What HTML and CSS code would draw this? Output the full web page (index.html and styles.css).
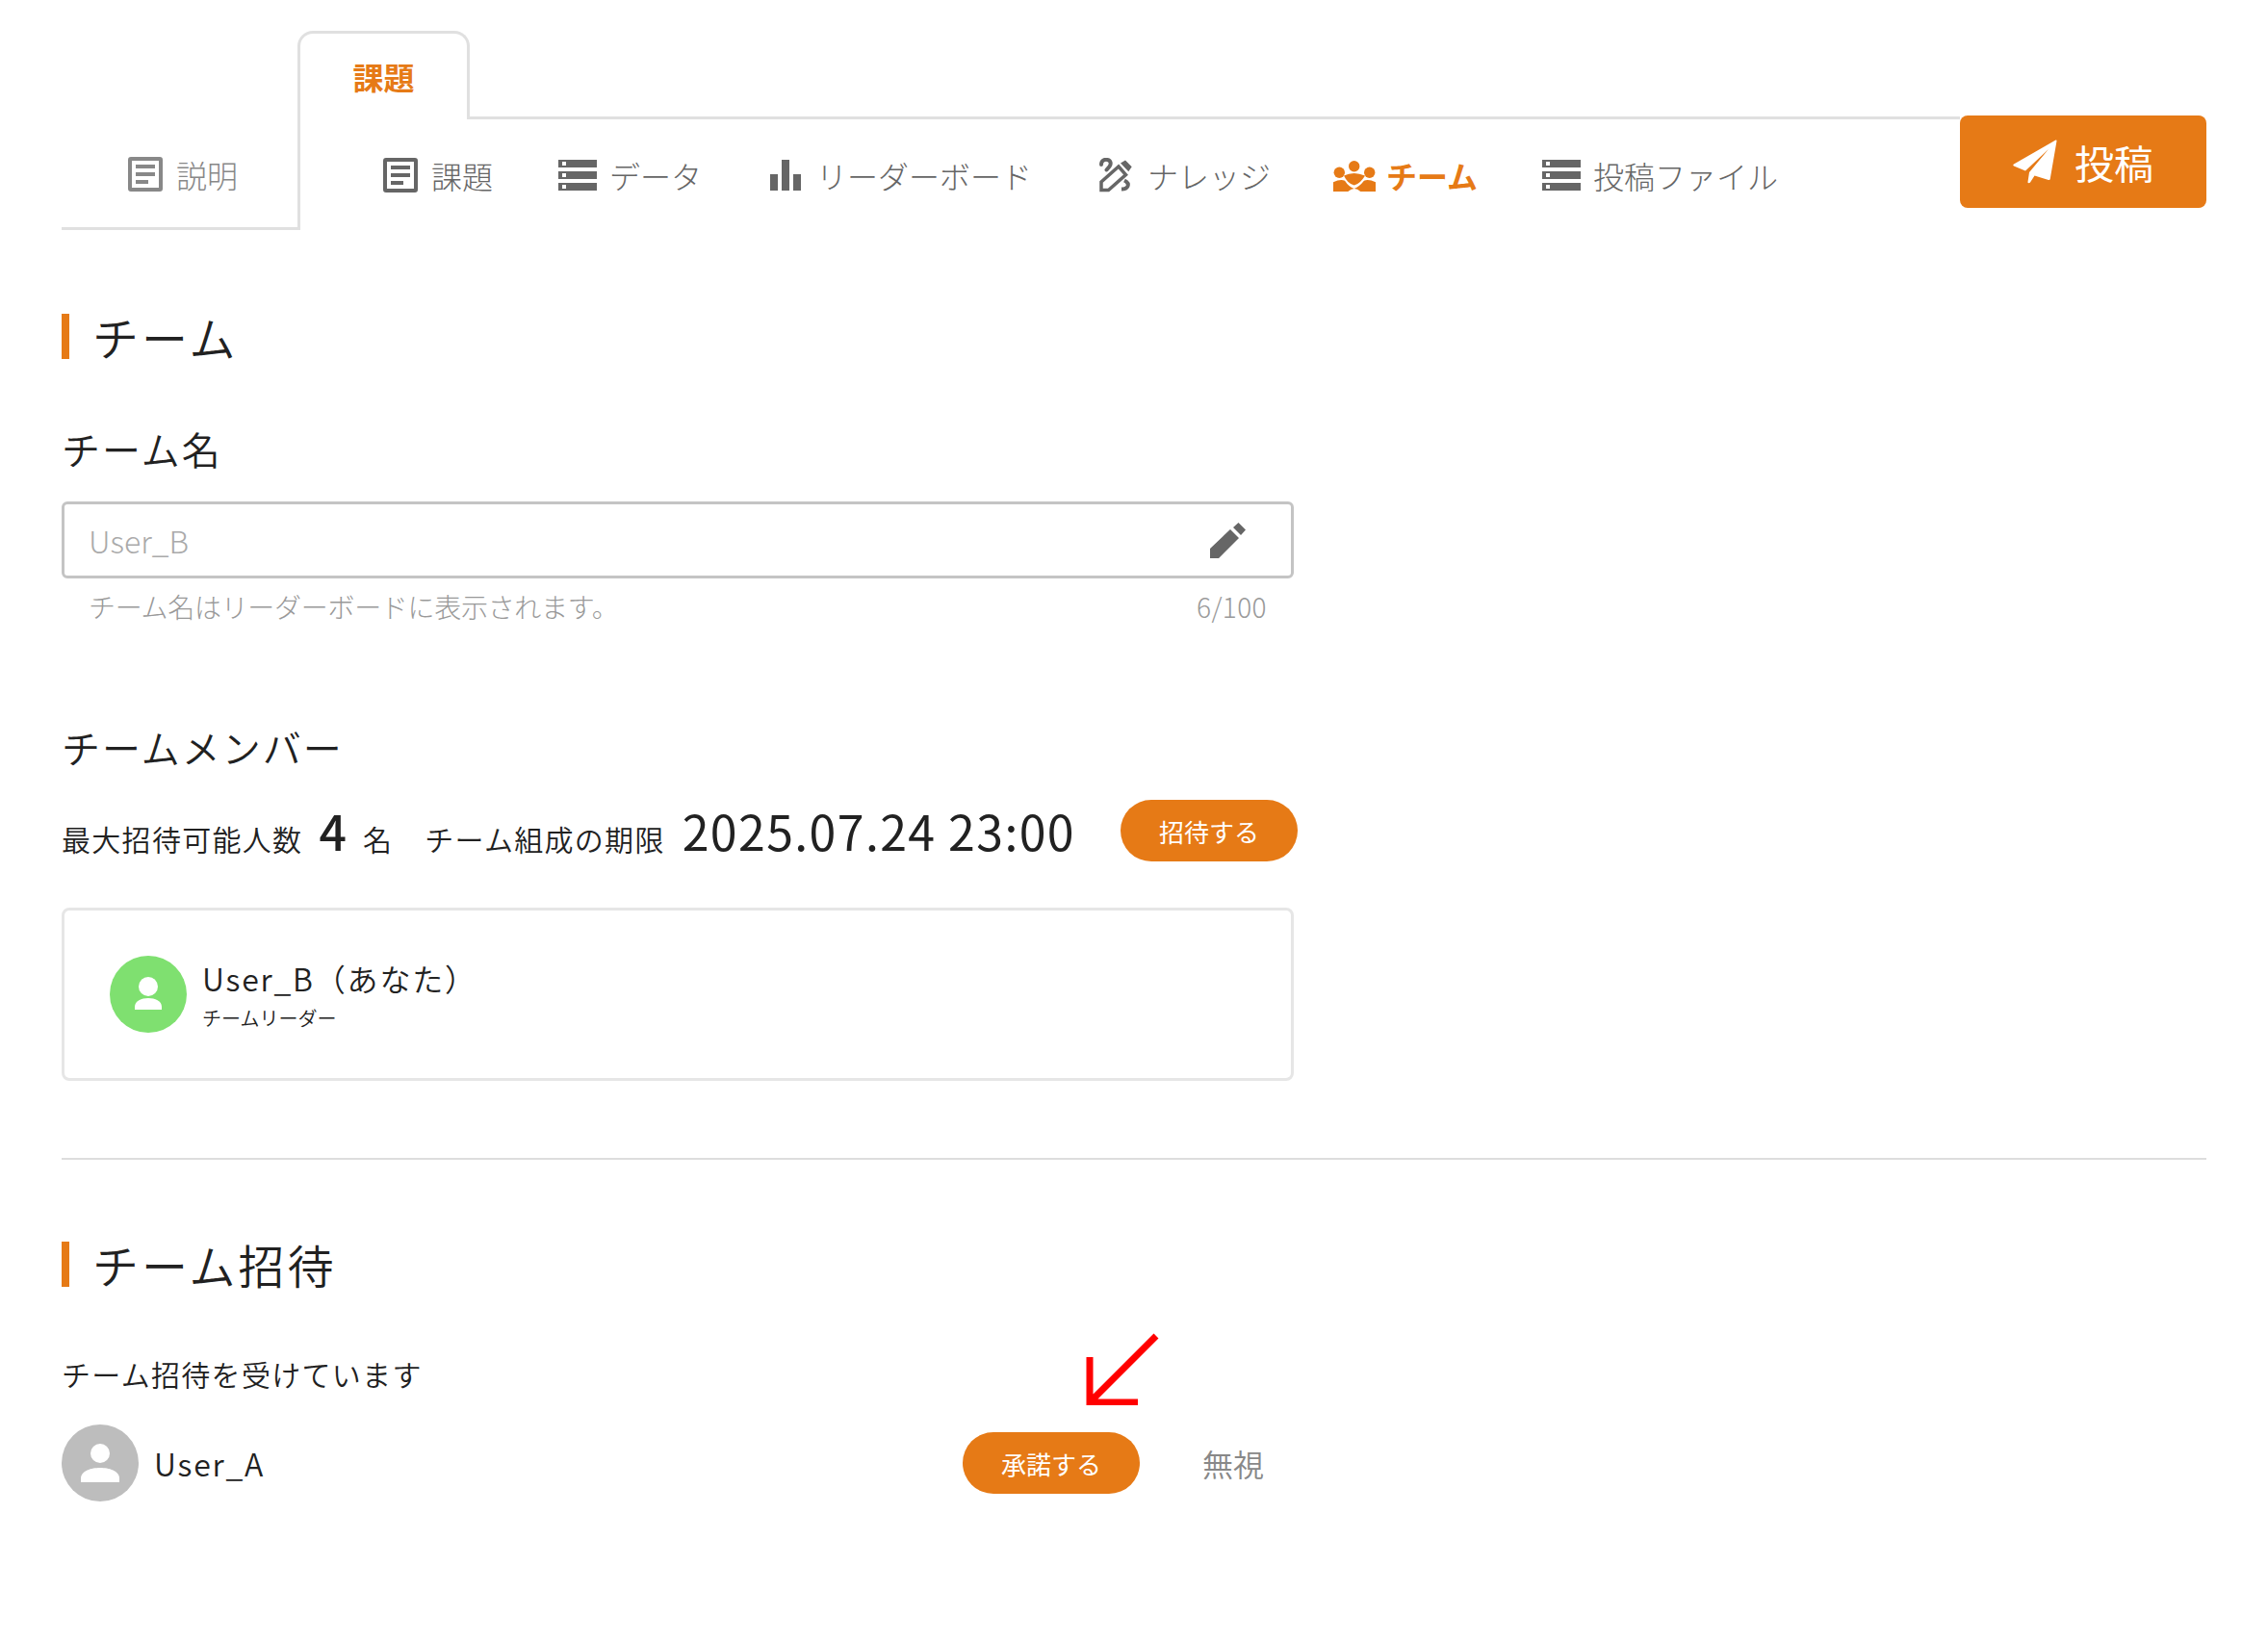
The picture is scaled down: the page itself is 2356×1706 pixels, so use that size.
FILE: index.html
```html
<!DOCTYPE html>
<html lang="ja">
<head>
    <meta charset="utf-8">
    <link rel="stylesheet" href="styles.css">
    <title>チーム</title>
</head>
<body>
    <header class="tabs">
        <a class="tab-plain">
            <svg class="icon-doc" viewBox="0 0 36 36"><path fill-rule="evenodd" d="M3 0h30a3 3 0 0 1 3 3v30a3 3 0 0 1-3 3H3a3 3 0 0 1-3-3V3a3 3 0 0 1 3-3zm1 4v28h28V4zm4 4h20v4H8zm0 8h20v4H8zm0 8h13v4H8z"/></svg>
            説明
        </a>
        <div class="tab-main">
            <div class="tab-head">
                <div class="tab-label">課題</div>
                <div class="tab-line"></div>
            </div>
            <nav class="subnav">
                <a class="subnav-item first">
                    <svg class="icon-doc" viewBox="0 0 36 36"><path fill-rule="evenodd" d="M3 0h30a3 3 0 0 1 3 3v30a3 3 0 0 1-3 3H3a3 3 0 0 1-3-3V3a3 3 0 0 1 3-3zm1 4v28h28V4zm4 4h20v4H8zm0 8h20v4H8zm0 8h13v4H8z"/></svg>
                    課題
                </a>
                <a class="subnav-item data">
                    <svg class="icon-data" viewBox="0 0 40 32"><path fill-rule="evenodd" d="M0 0h40v8H0zm4 2v4h4V2zM0 12h40v8H0zm4 2v4h4v-4zM0 24h40v8H0zm4 2v4h4v-4z"/></svg>
                    データ
                </a>
                <a class="subnav-item board">
                    <svg class="icon-bars" viewBox="0 0 32 32"><path d="M0 15h8v17H0zM12 0h8v32h-8zM24 15h8v17h-8z"/></svg>
                    リーダーボード
                </a>
                <a class="subnav-item know">
                    <svg class="icon-know" viewBox="0 0 35 36"><path d="M2 33.500V25L20 9l7.500 8.500-18 16z" fill="none" stroke="currentColor" stroke-width="3.500"/><path d="M2 7C2 2 6 1.500 8.500 2c3.500.7 4 4.500 2 7L7.500 12.500" fill="none" stroke="currentColor" stroke-width="4" stroke-linecap="round"/><path d="M22 5.500L27 2.500 33.700 9.300 30.300 14.300z"/><path d="M26 23.500c3 1.500 4.500 3.500 3.500 6-1 2.300-3.500 3-6.500 3" fill="none" stroke="currentColor" stroke-width="4"/></svg>
                    ナレッジ
                </a>
                <a class="subnav-item team">
                    <svg class="icon-team" viewBox="0 0 44 34"><circle cx="21.700" cy="7.700" r="5.700"/><circle cx="6.300" cy="14.300" r="5.700"/><circle cx="37.700" cy="14.300" r="5.700"/><path d="M11 17.500Q16 15 21.700 15 27 15 33 17.500 28 26 21.700 27.500 15 26 11 17.500z"/><path d="M0 34V24.300Q7 21 12 22.700 16 29 21.700 31 27 29 32 22.700 37 21 44 24.300V34H28.300Q22 28 15.300 34z"/></svg>
                    チーム
                </a>
                <a class="subnav-item files">
                    <svg class="icon-data" viewBox="0 0 40 32"><path fill-rule="evenodd" d="M0 0h40v8H0zm4 2v4h4V2zM0 12h40v8H0zm4 2v4h4v-4zM0 24h40v8H0zm4 2v4h4v-4z"/></svg>
                    投稿ファイル
                </a>
            </nav>
        </div>
        <a class="post-btn">
            <svg class="icon-plane" viewBox="0 0 46 46"><path d="M44.500 0.500L1 25.500c-1 .6-1 1.500 0 2L13 32.500 37 10 17 34l-1.500 10c0 1.500 1.500 1.500 2.500.5l4.500-7 14.500 4.500c1 .3 1.500 0 1.700-1L45.500 1.500c.1-1-.2-1.300-1-1z"/></svg>
            投稿
        </a>
    </header>

    <main class="content">
        <h2 class="section-title">チーム</h2>

        <h3 class="sub-title name-title">チーム名</h3>
        <div class="name-input">
            <span class="placeholder">User_B</span>
            <svg class="icon-pencil" viewBox="0 0 37 37"><path d="M0 27L21 7l9 9L9 37H0zM24 5l5.500-5L37 7.500 32 13z"/></svg>
        </div>
        <div class="input-help">
            <span>チーム名はリーダーボードに表示されます。</span>
            <span class="count">6/100</span>
        </div>

        <h3 class="sub-title member-title">チームメンバー</h3>
        <div class="limits">
            <span class="limit-label">最大招待可能人数</span>
            <span class="limit-num">4</span>
            <span class="limit-label unit">名</span>
            <span class="limit-label">チーム組成の期限</span>
            <span class="limit-date">2025.07.24 23:00</span>
            <button class="pill invite">招待する</button>
        </div>

        <div class="member-card">
            <div class="avatar green">
                <svg viewBox="0 0 80 80"><circle cx="40" cy="32" r="10"/><path d="M26 56v-3c0-6 7-9 14-9s14 3 14 9v3z"/></svg>
            </div>
            <div class="member-info">
                <div class="user-name">User_B（あなた）</div>
                <div class="user-role">チームリーダー</div>
            </div>
        </div>

        <hr class="divider">

        <h2 class="section-title">チーム招待</h2>
        <p class="invite-note">チーム招待を受けています</p>
        <div class="invite-row">
            <div class="avatar gray">
                <svg viewBox="0 0 80 80"><circle cx="40" cy="30" r="10"/><path d="M20 60v-4c0-8 11-11 20-11s20 3 20 11v4z"/></svg>
            </div>
            <div class="user-name">User_A</div>
            <div class="invite-actions">
                <svg class="arrow" viewBox="0 0 76 75"><path d="M73 3L4 72M4 25v47h50" fill="none" stroke="#ff0000" stroke-width="7"/></svg>
                <button class="pill">承諾する</button>
                <span class="ignore">無視</span>
            </div>
        </div>
    </main>
</body>
</html>
```

FILE: styles.css
```css
* {
    box-sizing: border-box;
}

body {
    margin: 0;
    background: #fff;
    color: #212121;
    font-family: "Noto Sans CJK JP", "Noto Sans", sans-serif;
    font-weight: 350;
}

svg {
    display: block;
    flex: none;
    fill: currentColor;
}

/* tabs */
.tabs {
    display: flex;
    padding: 32px 64px 0;
}

.tab-plain {
    display: flex;
    align-items: center;
    gap: 14px;
    width: 248px;
    height: 117px;
    margin-top: 90px;
    padding: 3px 0 0 69px;
    border-bottom: 3px solid #e0e0e0;
    color: #888;
    font-size: 32px;
    font-weight: 300;
}

.tab-main {
    flex: 1;
}

.tab-head {
    display: flex;
    height: 92px;
}

.tab-label {
    width: 179px;
    padding-top: 22px;
    margin-left: -3px;
    border: 3px solid #e0e0e0;
    border-bottom: 0;
    border-radius: 16px 16px 0 0;
    color: #e67a16;
    font-size: 32px;
    font-weight: 700;
    line-height: 44px;
    text-align: center;
}

.tab-line {
    flex: 1;
    border-bottom: 3px solid #e0e0e0;
}

.subnav {
    display: flex;
    align-items: center;
    height: 115px;
    margin-left: -3px;
    border-left: 3px solid #e0e0e0;
}

.subnav-item {
    display: flex;
    align-items: center;
    gap: 14px;
    color: #666;
    font-size: 32px;
    font-weight: 300;
}

.subnav-item.first {
    margin-left: 86px;
}

.subnav-item.data {
    margin-left: 68px;
    gap: 13px;
}

.subnav-item.board {
    margin-left: 71px;
    gap: 16px;
}

.subnav-item.know {
    margin-left: 70px;
    gap: 15px;
}

.subnav-item.team {
    margin-left: 65px;
    color: #e67a16;
    font-weight: 700;
    gap: 11px;
}

.subnav-item.files {
    margin-left: 67px;
    gap: 13px;
}

.icon-doc {
    width: 36px;
    height: 36px;
}

.icon-data {
    width: 40px;
    height: 32px;
}

.icon-bars {
    width: 32px;
    height: 32px;
}

.icon-know {
    width: 35px;
    height: 36px;
}

.icon-team {
    width: 44px;
    height: 34px;
}

.post-btn {
    display: flex;
    align-items: center;
    justify-content: center;
    gap: 18px;
    align-self: flex-start;
    width: 256px;
    height: 96px;
    margin-top: 88px;
    background: #e67a16;
    border-radius: 8px;
    color: #fff;
    font-size: 41px;
    font-weight: 400;
}

.icon-plane {
    width: 46px;
    height: 46px;
}

/* main */
.content {
    padding: 0 64px;
}

.section-title {
    margin: 0;
    padding-left: 24px;
    border-left: 8px solid #e67a16;
    font-size: 48px;
    font-weight: 350;
    letter-spacing: 3px;
    line-height: 47px;
}

.content > .section-title:first-child {
    margin-top: 87px;
}

.sub-title {
    margin: 0;
    font-size: 40px;
    font-weight: 350;
    letter-spacing: 2px;
    line-height: 50px;
}

.name-title {
    margin-top: 68px;
}

.name-input {
    display: flex;
    align-items: center;
    justify-content: space-between;
    width: 1280px;
    height: 80px;
    margin-top: 30px;
    padding: 0 47px 0 25px;
    border: 3px solid #c4c4c4;
    border-radius: 6px;
}

.placeholder {
    color: #aaa;
    font-size: 32px;
    font-weight: 300;
}

.icon-pencil {
    width: 37px;
    height: 37px;
    color: #666;
}

.input-help {
    display: flex;
    justify-content: space-between;
    width: 1280px;
    margin-top: 9px;
    padding: 0 28px;
    color: #999;
    font-size: 28px;
    font-weight: 300;
    letter-spacing: -0.300px;
    line-height: 40px;
}

.count {
    letter-spacing: 0.400px;
}

.member-title {
    margin-top: 101px;
}

.limits {
    display: flex;
    align-items: baseline;
    height: 64px;
    margin-top: 30px;
}

.limit-label {
    font-size: 30px;
    letter-spacing: 1.300px;
}

.limit-num {
    margin-left: 17px;
    font-size: 50px;
    font-weight: 500;
    line-height: 1;
}

.limit-label.unit {
    margin: 0 33px 0 17px;
}

.limit-date {
    margin-left: 18px;
    font-size: 50px;
    font-weight: 400;
    letter-spacing: 1.400px;
    line-height: 63px;
}

.pill {
    width: 184px;
    height: 64px;
    border: 0;
    border-radius: 32px;
    background: #e67a16;
    color: #fff;
    font-family: inherit;
    font-size: 26px;
    font-weight: 400;
}

.pill.invite {
    align-self: center;
    margin-left: 47px;
}

.member-card {
    display: flex;
    align-items: center;
    gap: 16px;
    width: 1280px;
    height: 180px;
    margin-top: 48px;
    padding-left: 47px;
    border: 3px solid #e6e6e6;
    border-radius: 8px;
}

.member-info {
    margin-bottom: 3px;
}

.avatar {
    flex: none;
    width: 80px;
    height: 80px;
    border-radius: 50%;
    color: #fff;
}

.avatar.green {
    background: #7fe070;
}

.avatar.gray {
    background: #bdbdbd;
}

.user-name {
    font-size: 32px;
    letter-spacing: 1.800px;
    line-height: 48px;
}

.user-role {
    margin-top: 4px;
    font-size: 20px;
    line-height: 28px;
}

.divider {
    height: 2px;
    margin: 80px 0 85px;
    border: 0;
    background: #ddd;
}

.invite-note {
    margin: 68px 0 0;
    font-size: 30px;
    letter-spacing: 1.300px;
    line-height: 44px;
}

.invite-row {
    display: flex;
    align-items: center;
    gap: 16px;
    width: 1280px;
    margin-top: 31px;
}

.invite-actions {
    position: relative;
    display: flex;
    align-items: center;
    gap: 65px;
    margin-left: auto;
    padding-right: 31px;
}

.arrow {
    position: absolute;
    left: 128px;
    top: -103px;
    width: 76px;
    height: 75px;
}

.ignore {
    color: #888;
    font-size: 32px;
}
```
